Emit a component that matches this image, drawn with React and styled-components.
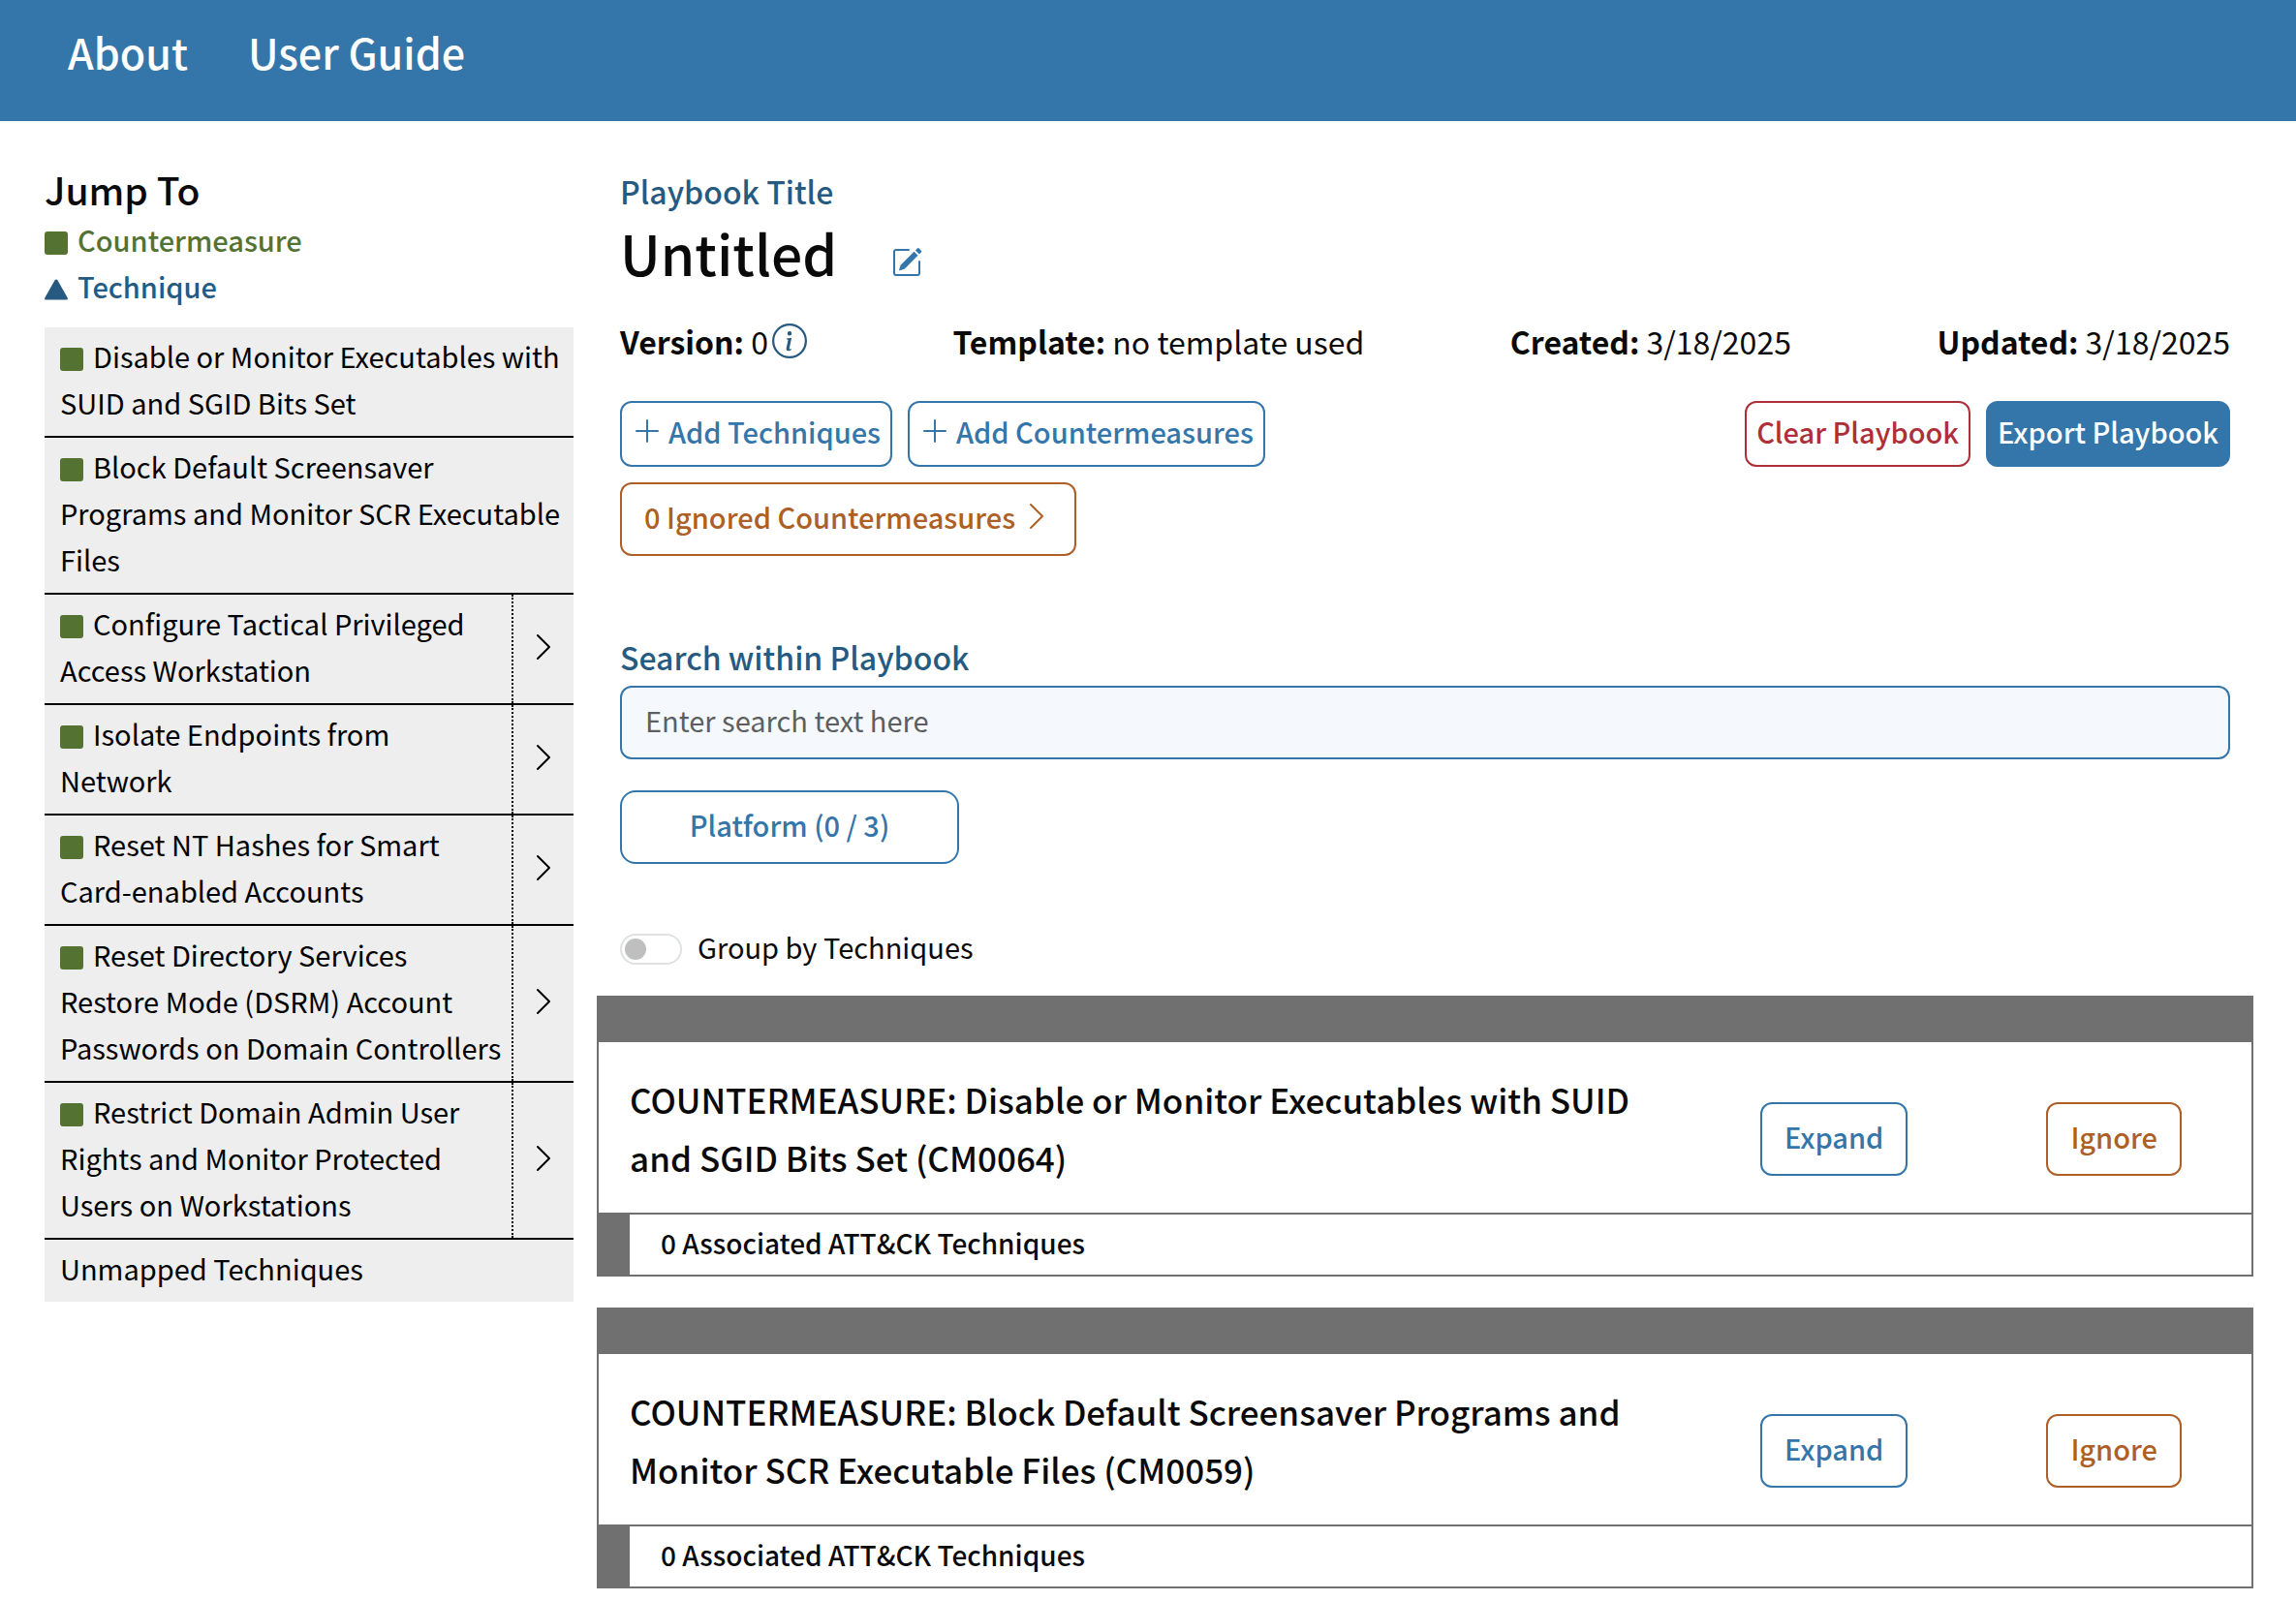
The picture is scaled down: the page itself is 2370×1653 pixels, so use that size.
import React, { useState } from "react";
import styled, { createGlobalStyle } from "styled-components";
import { BsChevronRight, BsInfoCircle, BsPencilSquare, BsPlusLg } from "react-icons/bs";

const color = {
  blue: "#3476aa",
  navy: "#265a80",
  green: "#547332",
  orange: "#ad5f26",
  red: "#ad2f3a",
  gray: "#707070",
};

const GlobalStyle = createGlobalStyle`
  *, *::before, *::after { box-sizing: border-box; }
  body {
    margin: 0;
    background: #fff;
    color: #0a0a0a;
    font-family: "Noto Sans CJK SC", "Noto Sans", sans-serif;
    font-size: 29px;
    line-height: 48px;
  }
  h1, h2, h3, p, ul { margin: 0; padding: 0; }
  h1, h2, h3 { font-weight: 500; }
  ul { list-style: none; }
  a { color: inherit; text-decoration: none; }
  button, input { font: inherit; margin: 0; }
  button { cursor: pointer; }
`;

const Header = styled.header`
  background: ${color.blue};
  padding: 21px 70px 40px;
`;

const HeaderNav = styled.nav`
  display: flex;
  gap: 62px;
  font-size: 43px;
  line-height: 64px;
  font-weight: 500;
  color: #fff;
`;

const Layout = styled.div`
  display: flex;
  align-items: flex-start;
  gap: 24px;
  padding: 0 44px 12px 46px;
`;

const Sidebar = styled.aside`
  flex: 0 0 546px;
  padding-top: 42px;
`;

const SidebarTitle = styled.h2`
  font-size: 39px;
  line-height: 56px;
`;

const Legend = styled.ul`
  margin-bottom: 19px;
`;

const LegendItem = styled.li`
  color: ${(p) => p.$color};
  font-weight: 500;
`;

const Marker = styled.svg`
  width: 24px;
  height: 24px;
  margin-right: 10px;
  vertical-align: -3px;
  fill: ${(p) => p.$color};
`;

const JumpItem = styled.li`
  display: flex;
  background: #eee;
  color: #000;
  & + & { border-top: 2px solid #000; }
`;

const JumpLink = styled.a`
  flex: 1;
  min-width: 0;
  padding: 5px 10px 11px 16px;
`;

const JumpToggle = styled.button`
  flex: 0 0 64px;
  display: flex;
  align-items: center;
  justify-content: center;
  padding: 0 0 4px;
  border: 0;
  border-left: 2px dotted #000;
  background: none;
  color: #000;
  font-size: 32px;
`;

const Main = styled.main`
  flex: 1;
  min-width: 0;
  padding-top: 48px;
`;

const Section = styled.section`
  padding: 0 24px;
`;

const Eyebrow = styled.p`
  color: ${color.navy};
  font-size: 32px;
  font-weight: 500;
`;

const TitleRow = styled.div`
  display: flex;
  align-items: flex-end;
  gap: 56px;
`;

const Title = styled.h1`
  font-size: 57px;
  line-height: 78px;
`;

const IconButton = styled.button`
  display: inline-flex;
  padding: 0 0 ${(p) => p.$lift || 0}px;
  border: 0;
  background: none;
  color: ${(p) => p.$color};
  font-size: ${(p) => p.$size}px;
`;

const MetaRow = styled.div`
  display: flex;
  justify-content: space-between;
  margin: 29px 0 38px;
  font-size: 32px;
`;

const MetaItem = styled.div`
  display: flex;
  align-items: center;
  gap: 4px;
  b { font-weight: 700; }
`;

const ButtonRow = styled.div`
  display: flex;
  gap: 16px;
  margin-bottom: 16px;
`;

const Spacer = styled.span`
  flex: 1;
`;

const Button = styled.button`
  display: inline-flex;
  align-items: center;
  justify-content: center;
  gap: 6px;
  min-width: ${(p) => (p.$wide ? 350 : 0)}px;
  padding: ${(p) => (p.$compact ? "5px 10px 11px" : "9px 23px 15px")};
  border: 2px solid ${(p) => p.$color};
  border-radius: ${(p) => (p.$wide ? 16 : 12)}px;
  background: ${(p) => (p.$filled ? p.$color : "#fff")};
  color: ${(p) => (p.$filled ? "#fff" : p.$color)};
  font-weight: 500;
  white-space: nowrap;
  svg { font-size: 32px; }
`;

const SearchLabel = styled.label`
  display: block;
  margin: 80px 0 6px;
  color: ${color.navy};
  font-size: 32px;
  font-weight: 500;
`;

const SearchInput = styled.input`
  display: block;
  width: 100%;
  height: 76px;
  margin-bottom: 32px;
  padding: 9px 24px 15px;
  border: 2px solid ${color.blue};
  border-radius: 12px;
  background: #f5f9fd;
  &::placeholder { color: #5c5f61; opacity: 1; }
`;

const SwitchRow = styled.div`
  display: flex;
  align-items: flex-start;
  gap: 16px;
  margin: 61px 0 27px;
`;

const Switch = styled.input`
  appearance: none;
  width: 64px;
  height: 32px;
  margin-top: 11px;
  padding: 3px;
  border: 2px solid #dfe1e2;
  border-radius: 16px;
  background: #fff;
  display: flex;
  &::before {
    content: "";
    width: 22px;
    height: 22px;
    border-radius: 50%;
    background: #bfbfbf;
  }
  &:checked { justify-content: flex-end; }
`;

const Cards = styled.div`
  display: grid;
  gap: 32px;
`;

const Card = styled.article`
  border: 2px solid ${color.gray};
  border-top-width: 48px;
`;

const CardHead = styled.div`
  display: flex;
  align-items: flex-start;
  padding: 29px 72px 27px 32px;
`;

const CardTitle = styled.h3`
  flex: 1;
  margin-right: 112px;
  font-size: 35px;
  line-height: 60px;
`;

const CardActions = styled.div`
  display: flex;
  gap: 143px;
  padding-top: 33px;
`;

const CardFoot = styled.p`
  padding: 5px 32px 9px;
  border-top: 2px solid ${color.gray};
  border-left: 32px solid ${color.gray};
  font-size: 28px;
  font-weight: 500;
`;

const jumpItems = [
  { label: "Disable or Monitor Executables with SUID and SGID Bits Set" },
  { label: "Block Default Screensaver Programs and Monitor SCR Executable Files" },
  { label: "Configure Tactical Privileged Access Workstation", children: true },
  { label: "Isolate Endpoints from Network", children: true },
  { label: "Reset NT Hashes for Smart Card-enabled Accounts", children: true },
  { label: "Reset Directory Services Restore Mode (DSRM) Account Passwords on Domain Controllers", children: true },
  { label: "Restrict Domain Admin User Rights and Monitor Protected Users on Workstations", children: true },
];

const cards = [
  { id: "CM0064", name: "Disable or Monitor Executables with SUID and SGID Bits Set" },
  { id: "CM0059", name: "Block Default Screensaver Programs and Monitor SCR Executable Files" },
];

const SquareMarker = () => (
  <Marker $color={color.green} viewBox="0 0 24 24" aria-hidden="true">
    <rect width="24" height="24" rx="3" />
  </Marker>
);

const TriangleMarker = () => (
  <Marker $color={color.navy} viewBox="0 0 24 24" aria-hidden="true">
    <path d="M10.6 2.3a1.6 1.6 0 0 1 2.8 0l10.3 18.1c.6 1-.1 2.1-1.2 2.1h-21c-1.1 0-1.8-1.1-1.2-2.1z" />
  </Marker>
);

export default function App() {
  const [grouped, setGrouped] = useState(false);
  return (
    <>
      <GlobalStyle />
      <Header>
        <HeaderNav>
          <a href="#about">About</a>
          <a href="#guide">User Guide</a>
        </HeaderNav>
      </Header>
      <Layout>
        <Sidebar>
          <SidebarTitle>Jump To</SidebarTitle>
          <Legend>
            <LegendItem $color={color.green}><SquareMarker />Countermeasure</LegendItem>
            <LegendItem $color={color.navy}><TriangleMarker />Technique</LegendItem>
          </Legend>
          <ul>
            {jumpItems.map((item) => (
              <JumpItem key={item.label}>
                <JumpLink href="#cards"><SquareMarker />{item.label}</JumpLink>
                {item.children && (
                  <JumpToggle aria-label="Open"><BsChevronRight /></JumpToggle>
                )}
              </JumpItem>
            ))}
            <JumpItem><JumpLink href="#unmapped">Unmapped Techniques</JumpLink></JumpItem>
          </ul>
        </Sidebar>
        <Main>
          <Section>
            <Eyebrow>Playbook Title</Eyebrow>
            <TitleRow>
              <Title>Untitled</Title>
              <IconButton $color={color.blue} $size={32} $lift={12} aria-label="Edit title"><BsPencilSquare /></IconButton>
            </TitleRow>
            <MetaRow>
              <MetaItem>
                <span><b>Version:</b> 0</span>
                <IconButton $color={color.navy} $size={36} aria-label="Version information"><BsInfoCircle /></IconButton>
              </MetaItem>
              <MetaItem><span><b>Template:</b> no template used</span></MetaItem>
              <MetaItem><span><b>Created:</b> 3/18/2025</span></MetaItem>
              <MetaItem><span><b>Updated:</b> 3/18/2025</span></MetaItem>
            </MetaRow>
            <ButtonRow>
              <Button $compact $color={color.blue}><BsPlusLg />Add Techniques</Button>
              <Button $compact $color={color.blue}><BsPlusLg />Add Countermeasures</Button>
              <Spacer />
              <Button $compact $color={color.red}>Clear Playbook</Button>
              <Button $compact $filled $color={color.blue}>Export Playbook</Button>
            </ButtonRow>
            <Button $color={color.orange}>0 Ignored Countermeasures<BsChevronRight /></Button>
            <SearchLabel htmlFor="search">Search within Playbook</SearchLabel>
            <SearchInput id="search" type="text" placeholder="Enter search text here" />
            <Button $wide $color={color.blue}>Platform (0 / 3)</Button>
            <SwitchRow>
              <Switch id="group" type="checkbox" role="switch" checked={grouped} onChange={() => setGrouped(!grouped)} />
              <label htmlFor="group">Group by Techniques</label>
            </SwitchRow>
          </Section>
          <Cards id="cards">
            {cards.map((card) => (
              <Card key={card.id}>
                <CardHead>
                  <CardTitle>{`COUNTERMEASURE: ${card.name} (${card.id})`}</CardTitle>
                  <CardActions>
                    <Button $color={color.blue}>Expand</Button>
                    <Button $color={color.orange}>Ignore</Button>
                  </CardActions>
                </CardHead>
                <CardFoot>0 Associated ATT&amp;CK Techniques</CardFoot>
              </Card>
            ))}
          </Cards>
        </Main>
      </Layout>
    </>
  );
}
